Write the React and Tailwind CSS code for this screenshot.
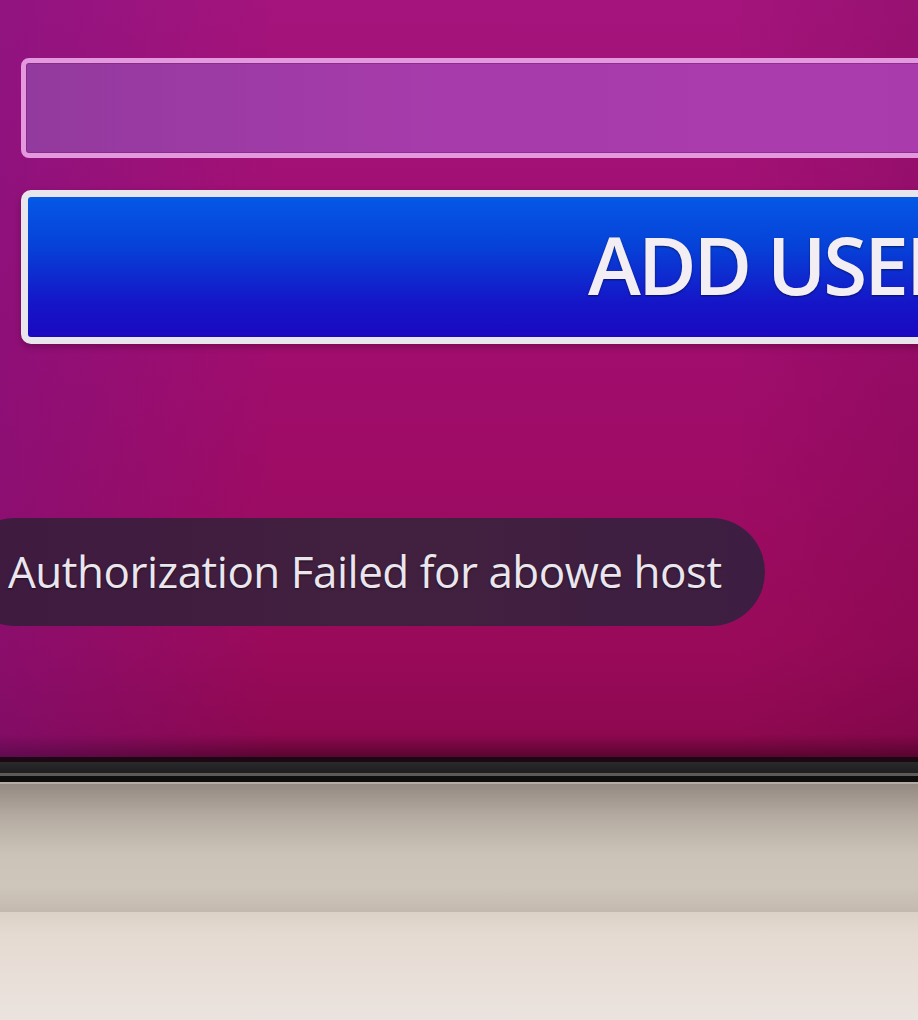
export default function App() {
  return (
    <div className="relative w-[918px] h-[1020px] overflow-hidden bg-[#e6dcd3] font-['Open_Sans',sans-serif]">
      {/* Screen */}
      <div className="h-[757px] bg-[linear-gradient(180deg,#a4147c_0%,#a00d6e_45%,#9a0a5a_85%,#8e0850_97%,#5a0530_100%)] relative overflow-hidden">
        <div className="absolute inset-0 bg-[linear-gradient(90deg,rgba(110,20,140,0.35)_0%,rgba(110,20,140,0)_30%,rgba(0,0,0,0)_80%,rgba(60,0,40,0.12)_100%)]" />
        <div className="relative pt-[58px] pl-[21px] flex flex-col">
          {/* Input field */}
          <div className="w-[1200px] h-[100px] rounded-[8px] border-[5px] border-[#e498dd] bg-[linear-gradient(90deg,#933a9e_0%,#a73bab_35%,#ab3cad_70%,#9f34a4_100%)] shadow-[inset_0_0_0_1px_rgba(120,30,120,0.5)]" />

          {/* Button */}
          <button className="mt-[32px] w-[1540px] h-[154px] rounded-[10px] border-[7px] border-[#e9e5ec] bg-[linear-gradient(180deg,#0558e6_0%,#0642d8_35%,#1516c8_75%,#1a08c0_100%)] shadow-[0_3px_6px_rgba(80,0,50,0.45)] flex items-center pl-[560px] pb-[6px]">
            <span className="text-[80px] leading-none font-semibold text-[#f2eef4] tracking-[-3px] [text-shadow:0_1px_2px_rgba(0,0,40,0.6)]">
              ADD USER
            </span>
          </button>

          {/* Error toast */}
          <div className="mt-[174px] -ml-[60px] w-[804px] h-[108px] rounded-full bg-[linear-gradient(90deg,#3e1a40_0%,#42203f_50%,#3d1e42_100%)] flex items-center pl-[47px] pb-[2px]">
            <span className="text-[44px] leading-none font-medium text-[#ebe5ee] tracking-[-0.5px] [text-shadow:0_1px_2px_rgba(0,0,0,0.6)]">
              Authorization Failed for abowe host
            </span>
          </div>
        </div>
      </div>

      {/* Bezel */}
      <div className="h-[5px] bg-[#1c0812]" />
      <div className="h-[11px] bg-[linear-gradient(180deg,#2a2a2c,#1e1e20)]" />
      <div className="h-[3px] bg-[#5e5a5c]" />
      <div className="h-[6px] bg-[#0d0d0e]" />
      <div className="h-[2px] bg-[#b5ada5]" />

      {/* Wall */}
      <div className="h-[128px] bg-[linear-gradient(180deg,#958a83_0%,#b4aaa1_25%,#cbc3b8_55%,#cec6bb_80%,#c4b9ae_100%)]" />

      {/* Shelf */}
      <div className="h-[108px] bg-[linear-gradient(180deg,#dcd1c7_0%,#e5dad1_20%,#e9e0da_70%,#ebe3df_100%)]" />
    </div>
  )
}
